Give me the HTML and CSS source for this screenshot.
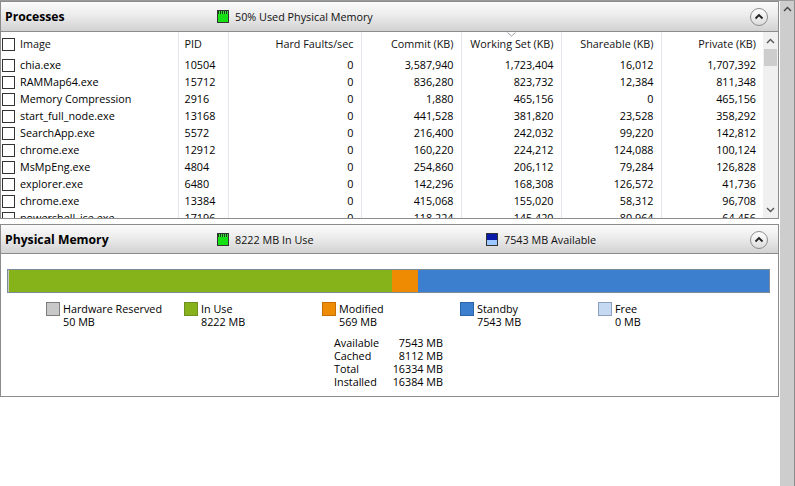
FILE: index.html
```html
<!DOCTYPE html>
<html>
<head>
<meta charset="utf-8">
<link rel="stylesheet" href="styles.css">
</head>
<body>
<div class="window">
  <div class="main">
    <section class="panel processes">
      <div class="panel-head">
        <span class="title">Processes</span>
        <span class="status s1"><span class="ico ico-green"></span>50% Used Physical Memory</span>
        <span class="collapse"><svg width="10" height="7" viewBox="0 0 10 7"><path d="M1.5 5.5 L5 2 L8.5 5.5" fill="none" stroke="#222" stroke-width="1.8"/></svg></span>
      </div>
      <div class="table-wrap">
        <div class="table-area">
          <table class="grid">
            <colgroup>
              <col class="c1"><col class="c2"><col class="c3"><col class="c4"><col class="c5"><col class="c6"><col class="c7">
            </colgroup>
            <thead>
              <tr>
                <th class="l"><span class="cb"></span>Image</th>
                <th class="l">PID</th>
                <th>Hard Faults/sec</th>
                <th>Commit (KB)</th>
                <th class="sorted">Working Set (KB)<svg class="sort" width="9" height="5" viewBox="0 0 9 5"><path d="M0.5 0.5 L4.5 4 L8.5 0.5" fill="none" stroke="#9aa3ad" stroke-width="1"/></svg></th>
                <th>Shareable (KB)</th>
                <th>Private (KB)</th>
              </tr>
            </thead>
            <tbody>
              <tr><td class="l"><span class="cb"></span>chia.exe</td><td class="l">10504</td><td>0</td><td>3,587,940</td><td>1,723,404</td><td>16,012</td><td>1,707,392</td></tr>
              <tr><td class="l"><span class="cb"></span>RAMMap64.exe</td><td class="l">15712</td><td>0</td><td>836,280</td><td>823,732</td><td>12,384</td><td>811,348</td></tr>
              <tr><td class="l"><span class="cb"></span>Memory Compression</td><td class="l">2916</td><td>0</td><td>1,880</td><td>465,156</td><td>0</td><td>465,156</td></tr>
              <tr><td class="l"><span class="cb"></span>start_full_node.exe</td><td class="l">13168</td><td>0</td><td>441,528</td><td>381,820</td><td>23,528</td><td>358,292</td></tr>
              <tr><td class="l"><span class="cb"></span>SearchApp.exe</td><td class="l">5572</td><td>0</td><td>216,400</td><td>242,032</td><td>99,220</td><td>142,812</td></tr>
              <tr><td class="l"><span class="cb"></span>chrome.exe</td><td class="l">12912</td><td>0</td><td>160,220</td><td>224,212</td><td>124,088</td><td>100,124</td></tr>
              <tr><td class="l"><span class="cb"></span>MsMpEng.exe</td><td class="l">4804</td><td>0</td><td>254,860</td><td>206,112</td><td>79,284</td><td>126,828</td></tr>
              <tr><td class="l"><span class="cb"></span>explorer.exe</td><td class="l">6480</td><td>0</td><td>142,296</td><td>168,308</td><td>126,572</td><td>41,736</td></tr>
              <tr><td class="l"><span class="cb"></span>chrome.exe</td><td class="l">13384</td><td>0</td><td>415,068</td><td>155,020</td><td>58,312</td><td>96,708</td></tr>
              <tr><td class="l"><span class="cb"></span>powershell_ise.exe</td><td class="l">17196</td><td>0</td><td>118,224</td><td>145,420</td><td>80,964</td><td>64,456</td></tr>
            </tbody>
          </table>
        </div>
        <div class="vscroll">
          <span class="arrow"><svg width="9" height="6" viewBox="0 0 9 6"><path d="M1 5 L4.5 1.5 L8 5" fill="none" stroke="#555" stroke-width="1.4"/></svg></span>
          <span class="thumb"></span>
          <span class="track"></span>
          <span class="arrow"><svg width="9" height="6" viewBox="0 0 9 6"><path d="M1 1 L4.5 4.5 L8 1" fill="none" stroke="#555" stroke-width="1.4"/></svg></span>
        </div>
      </div>
    </section>

    <section class="panel memory">
      <div class="panel-head">
        <span class="title">Physical Memory</span>
        <span class="status s1"><span class="ico ico-green"></span>8222 MB In Use</span>
        <span class="status s2"><span class="ico ico-blue"></span>7543 MB Available</span>
        <span class="collapse"><svg width="10" height="7" viewBox="0 0 10 7"><path d="M1.5 5.5 L5 2 L8.5 5.5" fill="none" stroke="#222" stroke-width="1.8"/></svg></span>
      </div>
      <div class="mem-body">
        <div class="bar">
          <span class="seg hw" style="width:1px"></span>
          <span class="seg inuse" style="width:383px"></span>
          <span class="seg mod" style="width:26px"></span>
          <span class="seg standby"></span>
        </div>
        <div class="legend">
          <div class="item"><span class="sw sw-hw"></span><div>Hardware Reserved<br>50 MB</div></div>
          <div class="item"><span class="sw sw-inuse"></span><div>In Use<br>8222 MB</div></div>
          <div class="item"><span class="sw sw-mod"></span><div>Modified<br>569 MB</div></div>
          <div class="item"><span class="sw sw-standby"></span><div>Standby<br>7543 MB</div></div>
          <div class="item"><span class="sw sw-free"></span><div>Free<br>0 MB</div></div>
        </div>
        <div class="stats">
          <span>Available</span><span class="v">7543 MB</span>
          <span>Cached</span><span class="v">8112 MB</span>
          <span>Total</span><span class="v">16334 MB</span>
          <span>Installed</span><span class="v">16384 MB</span>
        </div>
      </div>
    </section>
  </div>
  <div class="outer-scroll">
    <span class="arrow"><svg width="9" height="6" viewBox="0 0 9 6"><path d="M1 5 L4.5 1.5 L8 5" fill="none" stroke="#444" stroke-width="1.4"/></svg></span>
  </div>
</div>
</body>
</html>
```

FILE: styles.css
```css
* { box-sizing: border-box; }
html, body { margin: 0; padding: 0; }
body {
  width: 795px;
  height: 486px;
  overflow: hidden;
  background: #fff;
  font-family: "Open Sans", "Noto Sans", sans-serif;
  font-size: 10.8px;
  color: #000;
}
.window {
  display: flex;
  width: 795px;
  height: 486px;
  border-top: 1px solid #9a9a9a;
}
.main {
  width: 780px;
  display: flex;
  flex-direction: column;
}
.panel {
  width: 779px;
  border: 1px solid #8c8c8c;
  border-top: none;
}
.panel-head {
  position: relative;
  height: 31px;
  border-top: 1px solid #8c8c8c;
  border-bottom: 1px solid #8c8c8c;
  background: linear-gradient(#fbfbfb 0%, #ececec 45%, #d2d2d2 100%);
  display: flex;
  align-items: center;
}
.title {
  font-weight: 700;
  font-size: 12.2px;
  padding-left: 4px;
}
.status {
  position: absolute;
  top: 0;
  height: 29px;
  display: flex;
  align-items: center;
  color: #111;
}
.s1 { left: 216px; }
.s2 { left: 485px; }
.ico {
  display: inline-block;
  width: 12px;
  height: 13px;
  margin-right: 6px;
  border: 1px solid #333;
}
.ico-green {
  background:
    repeating-linear-gradient(90deg, #0a4d0a 0 1px, #49d349 1px 2px) top / 100% 3px no-repeat,
    #14e014;
}
.ico-blue {
  background: linear-gradient(#0a1aa8 0, #0a1aa8 6px, #9cc8ff 6px);
}
.collapse {
  position: absolute;
  right: 10px;
  top: 6px;
  width: 18px;
  height: 18px;
  border-radius: 50%;
  border: 1px solid #8d8d8d;
  background: linear-gradient(#ffffff, #dcdcdc);
  display: flex;
  align-items: center;
  justify-content: center;
}
.collapse svg { display: block; margin-top: -1px; }

.table-wrap {
  display: flex;
  height: 186px;
}
.table-area {
  width: 762px;
  overflow: hidden;
}
.grid {
  width: 762px;
  table-layout: fixed;
  border-collapse: collapse;
}
.c1 { width: 177px; }
.c2 { width: 50px; }
.c3 { width: 133px; }
.c4 { width: 100px; }
.c5 { width: 100px; }
.c6 { width: 100px; }
.c7 { width: 102px; }
.grid th, .grid td {
  text-align: right;
  padding: 0 7px 0 6px;
  white-space: nowrap;
  overflow: hidden;
  border-left: 1px solid #e4e8ed;
  font-weight: 400;
}
.grid th:first-child, .grid td:first-child { border-left: none; padding-left: 1px; }
.grid th {
  height: 24px;
  padding-bottom: 1px;
  color: #111;
  position: relative;
}
.grid td { height: 17px; line-height: 17px; }
.grid .l { text-align: left; }
.cb {
  display: inline-block;
  width: 13px;
  height: 13px;
  border: 1px solid #333;
  background: #fff;
  vertical-align: -3px;
  margin-right: 5px;
}
.sort {
  position: absolute;
  left: 45px;
  top: 0;
}
.vscroll {
  width: 15px;
  display: flex;
  flex-direction: column;
  background: #f0f0f0;
}
.vscroll .arrow {
  height: 17px;
  display: flex;
  align-items: center;
  justify-content: center;
}
.vscroll .thumb {
  height: 17px;
  margin: 0 1px;
  background: #cdcdcd;
}
.vscroll .track { flex: 1; }

.memory { margin-top: 5px; }
.memory .panel-head { height: 30px; }
.mem-body {
  height: 142px;
  padding: 15px 8px 0 6px;
}
.bar {
  display: flex;
  height: 24px;
  border: 1px solid #7a8a99;
  width: 763px;
}
.seg { height: 100%; }
.hw { background: #c7c7c7; }
.inuse { background: #86b31a; }
.mod { background: #ee8b03; }
.standby { flex: 1; background: #3d7fcf; }
.legend {
  display: flex;
  padding-left: 39px;
  margin-top: 9px;
  line-height: 13px;
}
.item {
  width: 138px;
  display: flex;
}
.sw {
  width: 14px;
  height: 14px;
  margin-right: 3px;
  border: 1px solid #7d7d7d;
  flex: none;
}
.sw-hw { background: #c8c8c8; }
.sw-inuse { background: #87b21b; border-color: #6f8f20; }
.sw-mod { background: #ef8c05; border-color: #c77000; }
.sw-standby { background: #3d7fcf; border-color: #2e64a8; }
.sw-free { background: #c6d9f3; border-color: #8aa0bf; }
.stats {
  display: grid;
  grid-template-columns: 50px 59px;
  margin: 8px 0 0 327px;
  line-height: 13px;
  white-space: nowrap;
}
.stats .v { text-align: right; }

.outer-scroll {
  width: 15px;
  margin-left: 1px;
  background: #cdcdcd;
  border-right: 1px solid #8a8a8a;
}
.outer-scroll .arrow {
  height: 16px;
  display: flex;
  align-items: center;
  justify-content: center;
}
```
